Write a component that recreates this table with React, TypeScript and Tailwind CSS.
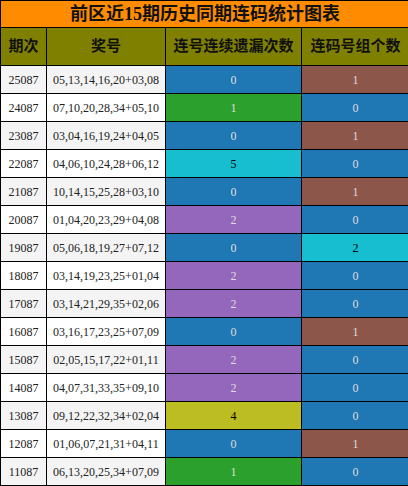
const palette: Record<string, string> = {
  blue: "bg-[#1f77b4] text-[#dddddd]",
  green: "bg-[#2ca02c] text-[#dddddd]",
  brown: "bg-[#8c564b] text-[#dddddd]",
  cyan: "bg-[#17becf] text-black",
  purple: "bg-[#9467bd] text-[#dddddd]",
  olive: "bg-[#bcbd22] text-black",
};

const rows: [string, string, number, string, number, string][] = [
  ["25087", "05,13,14,16,20+03,08", 0, "blue", 1, "brown"],
  ["24087", "07,10,20,28,34+05,10", 1, "green", 0, "blue"],
  ["23087", "03,04,16,19,24+04,05", 0, "blue", 1, "brown"],
  ["22087", "04,06,10,24,28+06,12", 5, "cyan", 0, "blue"],
  ["21087", "10,14,15,25,28+03,10", 0, "blue", 1, "brown"],
  ["20087", "01,04,20,23,29+04,08", 2, "purple", 0, "blue"],
  ["19087", "05,06,18,19,27+07,12", 0, "blue", 2, "cyan"],
  ["18087", "03,14,19,23,25+01,04", 2, "purple", 0, "blue"],
  ["17087", "03,14,21,29,35+02,06", 2, "purple", 0, "blue"],
  ["16087", "03,16,17,23,25+07,09", 0, "blue", 1, "brown"],
  ["15087", "02,05,15,17,22+01,11", 2, "purple", 0, "blue"],
  ["14087", "04,07,31,33,35+09,10", 2, "purple", 0, "blue"],
  ["13087", "09,12,22,32,34+02,04", 4, "olive", 0, "blue"],
  ["12087", "01,06,07,21,31+04,11", 0, "blue", 1, "brown"],
  ["11087", "06,13,20,25,34+07,09", 1, "green", 0, "blue"],
];

export default function App() {
  return (
    <div className="w-[408px] h-[486px] overflow-hidden bg-white">
      <table className="w-[409px] table-fixed border-collapse font-['Liberation_Serif','Noto_Sans_CJK_SC',serif]">
        <colgroup>
          <col className="w-[46px]" />
          <col className="w-[119px]" />
          <col className="w-[136px]" />
          <col className="w-[108px]" />
        </colgroup>
        <thead>
          {/* title */}
          <tr className="h-[27px]">
            <th
              colSpan={4}
              className="border border-black bg-[#ff8c00] p-0 text-center text-[18px] font-bold leading-none text-[#111]"
            >
              前区近15期历史同期连码统计图表
            </th>
          </tr>
          <tr className="h-[38px]">
            {["期次", "奖号", "连号连续遗漏次数", "连码号组个数"].map((h) => (
              <th
                key={h}
                className="border border-black bg-[#808000] p-0 text-center text-[15px] font-bold text-[#111]"
              >
                {h}
              </th>
            ))}
          </tr>
        </thead>
        <tbody>
          {rows.map(([issue, nums, a, ac, b, bc], i) => (
            <tr key={issue} className={`h-[28px] ${i % 2 === 0 ? "bg-[#f4f4f4]" : "bg-white"}`}>
              <td className="border border-black p-0 text-center text-[12px] text-[#222]">{issue}</td>
              <td className="border border-black p-0 text-center text-[12px] text-[#222]">{nums}</td>
              <td className={`border border-black p-0 text-center text-[12px] ${palette[ac]}`}>{a}</td>
              <td className={`border border-black p-0 text-center text-[12px] ${palette[bc]}`}>{b}</td>
            </tr>
          ))}
        </tbody>
      </table>
    </div>
  );
}
